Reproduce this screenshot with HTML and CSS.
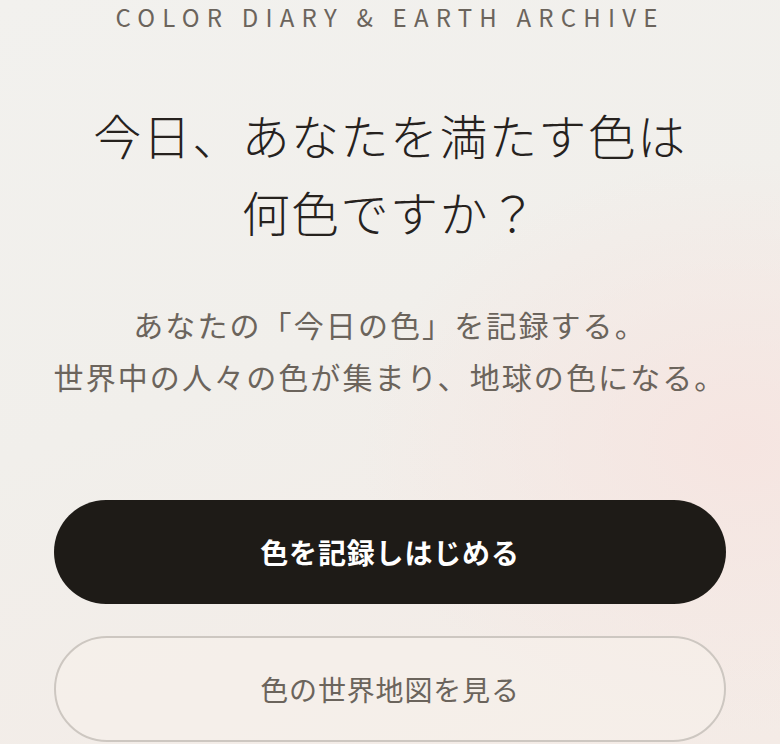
FILE: index.html
```html
<!DOCTYPE html>
<html lang="ja">
<head>
    <meta charset="UTF-8">
    <meta name="viewport" content="width=device-width, initial-scale=1.0">
    <title>Color Diary &amp; Earth Archive</title>
    <link rel="stylesheet" href="styles.css">
</head>
<body>
    <main class="hero">
        <!-- ブランド表記 -->
        <p class="brand">COLOR DIARY &amp; EARTH ARCHIVE</p>

        <!-- メインコピー -->
        <h1 class="headline">今日、あなたを満たす色は<br>何色ですか？</h1>

        <p class="lead">あなたの「今日の色」を記録する。<br>世界中の人々の色が集まり、地球の色になる。</p>

        <!-- アクション -->
        <div class="actions">
            <a class="btn btn-primary" href="#record">色を記録しはじめる</a>
            <a class="btn btn-outline" href="#map">色の世界地図を見る</a>
        </div>
    </main>
</body>
</html>
```

FILE: styles.css
```css
/* 基本リセット */
* {
    box-sizing: border-box;
    margin: 0;
    padding: 0;
}

html,
body {
    height: 100%;
}

body {
    font-family: "Noto Sans CJK JP", "Noto Sans", sans-serif;
    color: #2a2622;
    background:
        radial-gradient(ellipse 70% 55% at 95% 60%, rgba(246, 228, 224, 0.9), rgba(246, 228, 224, 0) 70%),
        linear-gradient(160deg, #f2f1ee 0%, #f1efeb 45%, #f4ebe6 100%);
    overflow: hidden;
}

/* レイアウト */
.hero {
    padding: 0 54px;
    text-align: center;
}

.brand {
    font-size: 24px;
    line-height: 34px;
    letter-spacing: 0.3em;
    color: #6b645c;
}

.headline {
    margin-top: 62px;
    font-size: 48px;
    font-weight: 300;
    line-height: 77px;
    letter-spacing: 0.03em;
    color: #26221e;
}

.lead {
    margin: 48px -30px 0;
    font-size: 30px;
    line-height: 52px;
    letter-spacing: 0.07em;
    white-space: nowrap;
    color: #6b645c;
}

/* ボタン */
.actions {
    margin-top: 98px;
    display: flex;
    flex-direction: column;
    gap: 32px;
}

.btn {
    display: flex;
    align-items: center;
    justify-content: center;
    height: 104px;
    border-radius: 999px;
    font-size: 28px;
    letter-spacing: 0.03em;
    text-decoration: none;
}

.btn-primary {
    background: #1e1b17;
    color: #ffffff;
    font-weight: 700;
}

.btn-outline {
    height: 106px;
    border: 2px solid #cdc7c1;
    background: rgba(247, 241, 236, 0.5);
    color: #6b645c;
}
```
